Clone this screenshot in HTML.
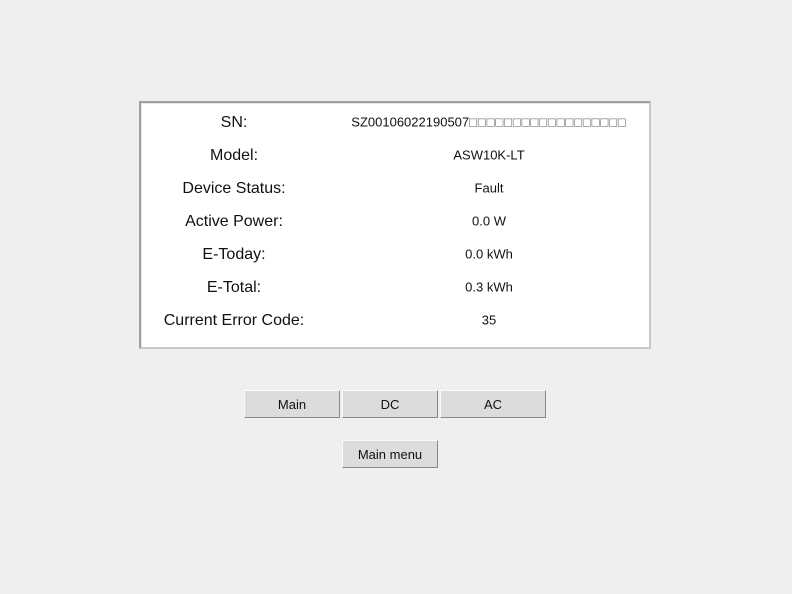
<!DOCTYPE html>
<html><head><style>
body{margin:0;width:792px;height:594px;background:#efefef;font-family:"Liberation Sans",sans-serif;position:relative;overflow:hidden}
.panel{position:absolute;left:139px;top:101px;width:508px;height:244px;background:#fff;border:2px solid;border-color:#a0a0a0 #c8c8c8 #c8c8c8 #a0a0a0;box-shadow:inset 1px 1px 0 #e8e8e8}
.l{position:absolute;width:200px;left:134px;text-align:center;font-size:16px;color:#111;transform:translateY(-50%);margin-top:2px}
.v{position:absolute;width:300px;left:339px;text-align:center;font-size:13px;color:#111;transform:translateY(-50%);margin-top:1px}
.b{position:absolute;height:28px;box-sizing:border-box;background:#dcdcdc;border:1px solid;border-color:#fafafa #888 #888 #fafafa;font-size:13px;text-align:center;line-height:27px;color:#111}
</style></head><body>
<div class="panel"></div>
<div class="l" style="top:121px">SN:</div><div class="v" style="top:121px">SZ00106022190507<span style="color:#555;letter-spacing:0.9px">□□□□□□□□□□□□□□□□□□</span></div>
<div class="l" style="top:154px">Model:</div><div class="v" style="top:154px">ASW10K-LT</div>
<div class="l" style="top:187px">Device Status:</div><div class="v" style="top:187px">Fault</div>
<div class="l" style="top:220px">Active Power:</div><div class="v" style="top:220px">0.0 W</div>
<div class="l" style="top:253px">E-Today:</div><div class="v" style="top:253px">0.0 kWh</div>
<div class="l" style="top:286px">E-Total:</div><div class="v" style="top:286px">0.3 kWh</div>
<div class="l" style="top:319px">Current Error Code:</div><div class="v" style="top:319px">35</div>
<div class="b" style="left:244px;top:390px;width:96px">Main</div>
<div class="b" style="left:342px;top:390px;width:96px">DC</div>
<div class="b" style="left:440px;top:390px;width:106px">AC</div>
<div class="b" style="left:342px;top:440px;width:96px">Main menu</div>
</body></html>
